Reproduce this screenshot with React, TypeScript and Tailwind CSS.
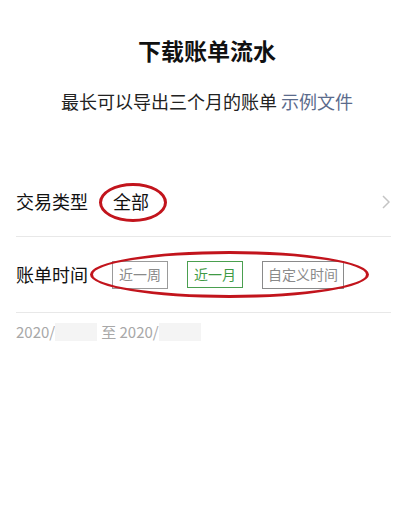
import React from "react";

const font = { fontFamily: '"Noto Sans CJK SC", "Noto Sans", sans-serif' };

export default function App() {
  return (
    <div className="w-[414px] h-[506px] bg-white overflow-hidden" style={font}>
      {/* Header */}
      <div className="pt-[34px] text-center">
        <h1 className="text-[23px] leading-[32px] font-bold text-[#111]">下载账单流水</h1>
        <p className="mt-[22px] text-[18px] leading-[26px] text-[#222]">
          最长可以导出三个月的账单 <span className="text-[#5b6b8c]">示例文件</span>
        </p>
      </div>

      <div className="mt-[51px] pl-4 pr-[23px]">
        {/* 交易类型 */}
        <div className="relative h-[72px] flex items-center border-b border-[#e8e8e8] pt-[2px]">
          <span className="text-[18px] text-[#111]">交易类型</span>
          <span className="ml-[25px] text-[18px] text-[#111]">全部</span>
          <svg className="ml-auto mr-[1px]" width="8" height="14" viewBox="0 0 8 14" fill="none">
            <path d="M1 1l6 6-6 6" stroke="#c4c4c4" strokeWidth="1.5" />
          </svg>
          <div className="absolute left-[83px] top-[18px] w-[68px] h-[39px] rounded-[50%] border-[3px] border-[#c2141c]" />
        </div>

        {/* 账单时间 */}
        <div className="relative h-[76px] flex items-center border-b border-[#e8e8e8]">
          <span className="text-[18px] text-[#111]">账单时间</span>
          <div className="ml-[24px] flex items-center gap-[19px]">
            <span className="h-[28px] px-[6px] flex items-center border border-[#9a9a9a] text-[14px] text-[#8a8a8a]">近一周</span>
            <span className="h-[27px] px-[6px] flex items-center border border-[#4a9f4f] text-[14px] text-[#3f9a45]">近一月</span>
            <span className="h-[28px] px-[5px] flex items-center border border-[#8a8a8a] text-[14px] text-[#8a8a8a]">自定义时间</span>
          </div>
          <div className="absolute left-[74px] top-[14px] w-[279px] h-[47px] rounded-[50%] border-[3px] border-[#c2141c]" />
        </div>

        {/* date range */}
        <div className="mt-[9px] flex items-center text-[15px] leading-[20px] text-[#a8a8a8]">
          <span>2020/</span>
          <span className="w-[42px] h-[18px] bg-[#f4f4f4]" />
          <span className="ml-[4px]">至 2020/</span>
          <span className="w-[42px] h-[18px] bg-[#f4f4f4]" />
        </div>
      </div>
    </div>
  );
}
